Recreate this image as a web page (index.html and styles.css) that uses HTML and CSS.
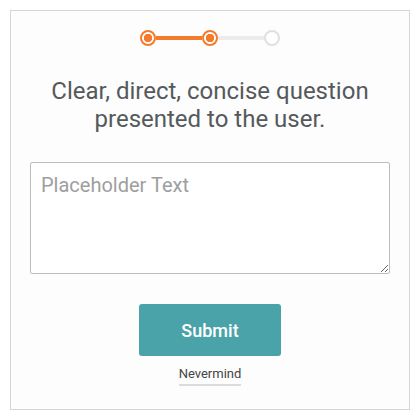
FILE: index.html
```html
<!DOCTYPE html>
<html lang="en">
<head>
  <meta charset="UTF-8">
  <title>Question</title>
  <link rel="stylesheet" href="styles.css">
</head>
<body>
  <div class="card">
    <div class="stepper">
      <span class="step done"></span>
      <span class="bar done"></span>
      <span class="step done"></span>
      <span class="bar"></span>
      <span class="step"></span>
    </div>
    <h1 class="question">Clear, direct, concise question presented to the user.</h1>
    <textarea class="answer" placeholder="Placeholder Text"></textarea>
    <button class="submit">Submit</button>
    <a class="nevermind" href="#">Nevermind</a>
  </div>
</body>
</html>
```

FILE: styles.css
```css
body {
  margin: 0;
  padding: 10px;
  background-color: #fff;
  font-family: Roboto, 'Liberation Sans', sans-serif;
}

.card {
  box-sizing: border-box;
  width: 400px;
  height: 400px;
  border: 1px solid #d6d6d6;
  background-color: #fdfdfd;
  padding: 19px 20px 0;
  display: flex;
  flex-direction: column;
  align-items: center;
}

.stepper {
  display: flex;
  align-items: center;
}

.step {
  box-sizing: border-box;
  width: 16px;
  height: 16px;
  border-radius: 50%;
  border: 2px solid #e0e0e0;
  background-color: #fff;
}

.step.done {
  border-color: #f47b2c;
  background: radial-gradient(circle, #f47b2c 0 4px, #fff 4.5px);
}

.bar {
  width: 46px;
  height: 4px;
  background-color: #ececec;
}

.bar.done {
  background-color: #f47b2c;
}

.question {
  margin: 31px 0 0;
  width: 360px;
  font-size: 24px;
  font-weight: 400;
  line-height: 28px;
  text-align: center;
  color: #55595c;
}

.answer {
  box-sizing: border-box;
  width: 360px;
  height: 112px;
  margin-top: 29px;
  padding: 10px 10px;
  border: 1px solid #bdbdbd;
  border-radius: 2px;
  font-family: Roboto, 'Liberation Sans', sans-serif;
  font-size: 20px;
  color: #333;
  background-color: #fff;
}

.answer::placeholder {
  color: #9e9e9e;
}

.submit {
  margin-top: 30px;
  width: 142px;
  height: 52px;
  border: none;
  border-radius: 3px;
  background-color: #4aa3a8;
  color: #fff;
  font-family: Roboto, 'Liberation Sans', sans-serif;
  font-size: 18px;
  font-weight: 500;
}

.nevermind {
  margin-top: 10px;
  font-size: 13px;
  color: #444;
  text-decoration: none;
  padding-bottom: 3px;
  border-bottom: 2px solid #dcdcdc;
}
```
